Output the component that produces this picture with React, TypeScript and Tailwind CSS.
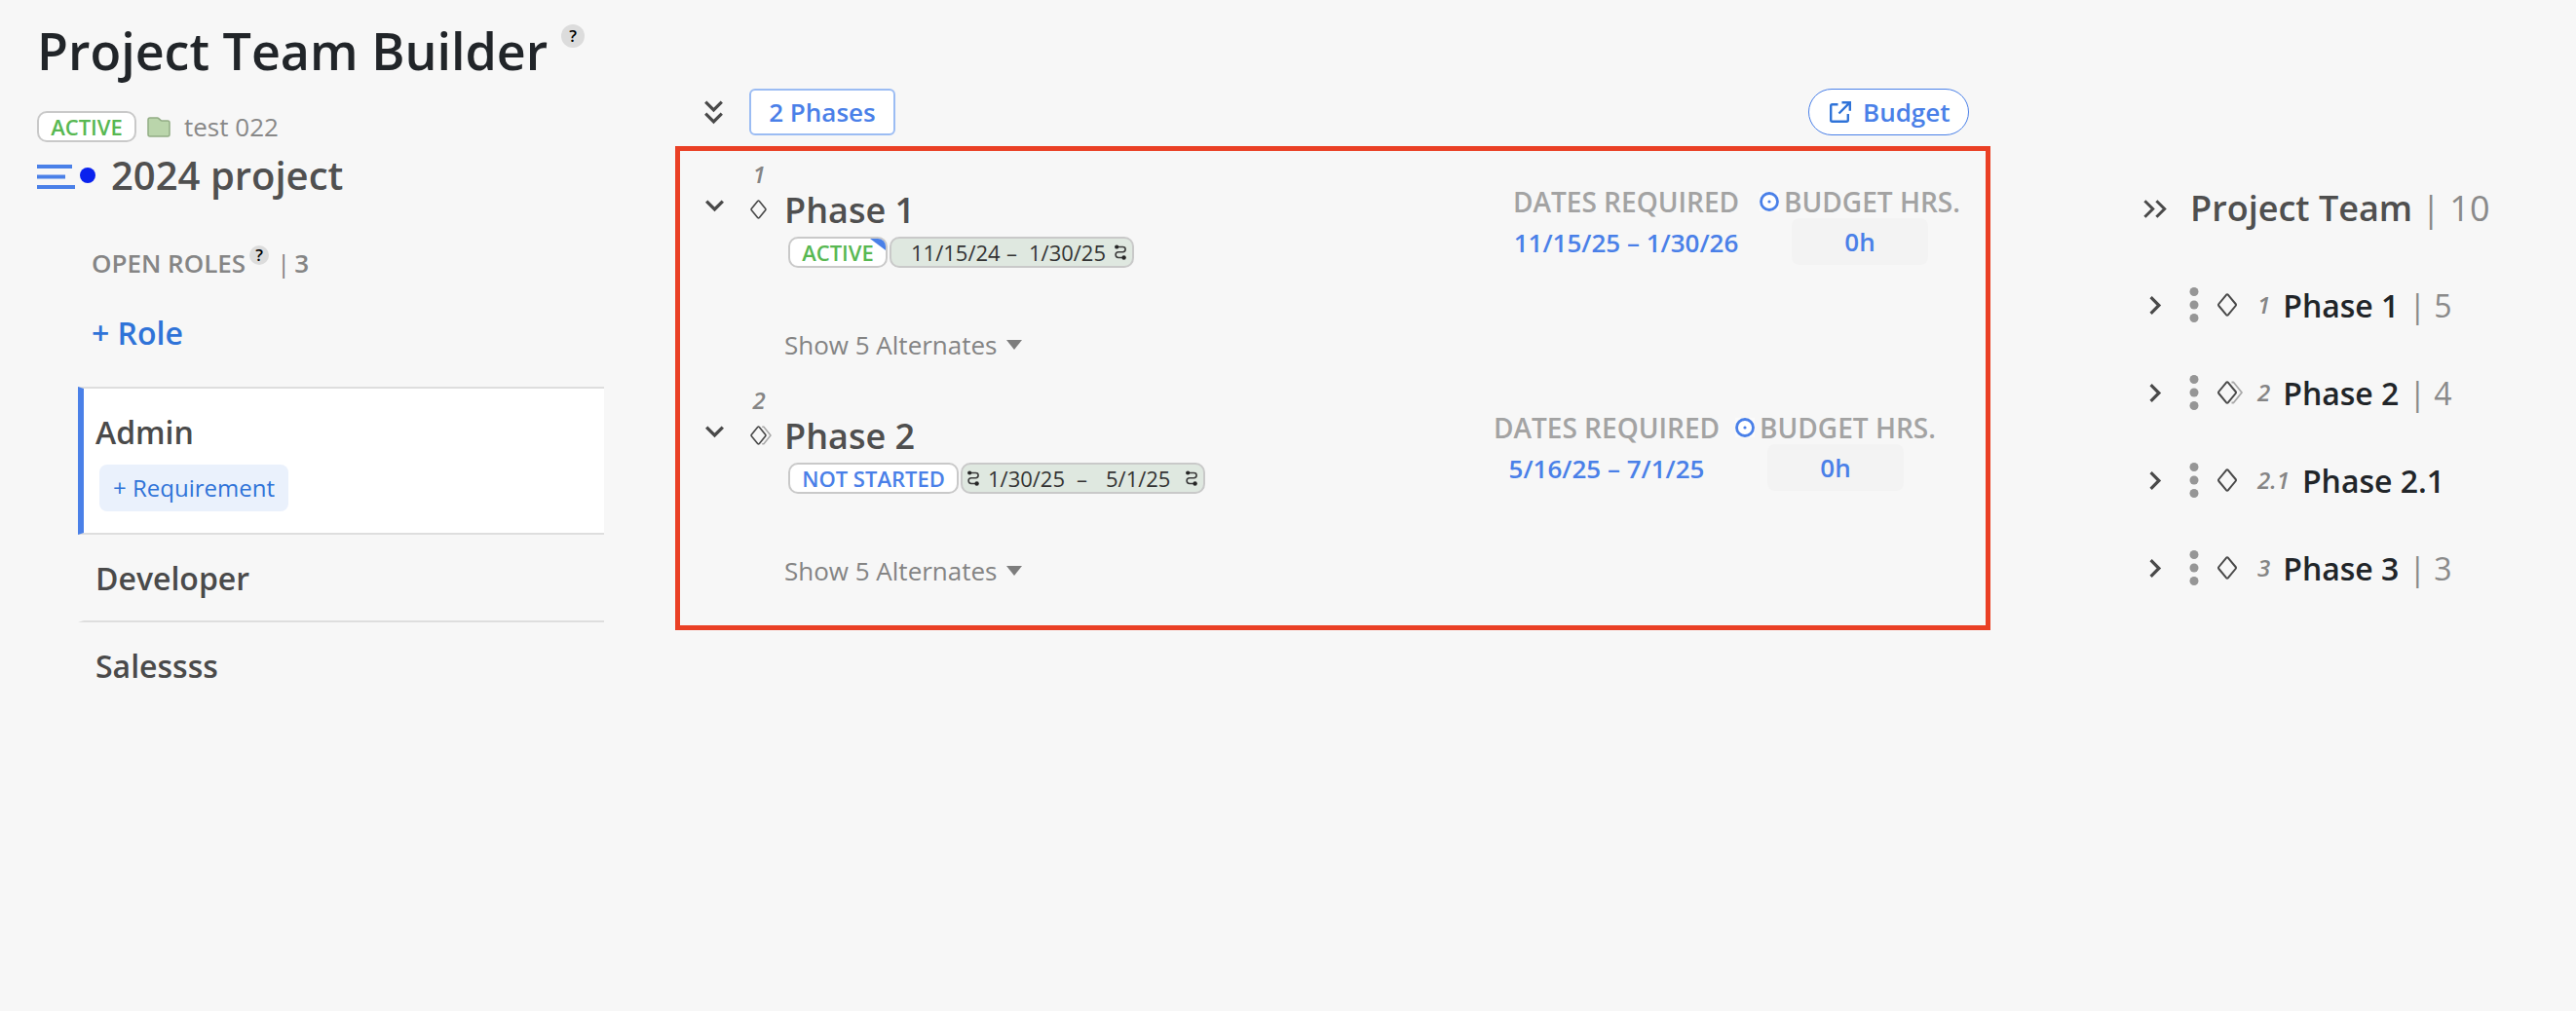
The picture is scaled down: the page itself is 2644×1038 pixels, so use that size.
import type { ReactNode } from "react";

type PhaseStatus = "ACTIVE" | "NOT STARTED";

interface Phase {
  id: number;
  name: string;
  status: PhaseStatus;
  nested?: boolean;
  flagged?: boolean;
  required: string;
}

const phases: Phase[] = [
  { id: 1, name: "Phase 1", status: "ACTIVE", flagged: true, required: "11/15/25 – 1/30/26" },
  { id: 2, name: "Phase 2", status: "NOT STARTED", nested: true, required: "5/16/25 – 7/1/25" },
];

const teamPhases = [
  { index: "1", name: "Phase 1", count: 5 },
  { index: "2", name: "Phase 2", count: 4, nested: true },
  { index: "2.1", name: "Phase 2.1" },
  { index: "3", name: "Phase 3", count: 3 },
];

const HelpBadge = ({ className }: { className: string }) => (
  <span className={`flex items-center justify-center rounded-full bg-[#dcdcdc] font-semibold text-black ${className}`}>?</span>
);

const ChevronDown = () => (
  <svg className="block h-[13px] w-[19px]" viewBox="0 0 19 13" fill="none" stroke="#4a4a4a" strokeWidth="3.4">
    <path d="M1.2 1.6 9.5 9.9 17.8 1.6" />
  </svg>
);

const ChevronRight = () => (
  <svg className="block h-[19px] w-[13px]" viewBox="0 0 13 19" fill="none" stroke="#4a4a4a" strokeWidth="3.2">
    <path d="M1.6 1.2 9.9 9.5 1.6 17.8" />
  </svg>
);

const Diamond = ({ nested, className }: { nested?: boolean; className: string }) => (
  <svg className={`block overflow-visible ${className}`} viewBox="0 0 20 24" fill="none" strokeLinejoin="round">
    {nested && <path d="M14.5 1.5h2L25 12l-8.500 10.500h-2" stroke="#a8a8a8" strokeWidth="1.8" />}
    <path
      d="M9 1.800Q10 .8 11 1.800L18.600 11Q19.400 12 18.600 13L11 22.200Q10 23.200 9 22.200L1.400 13Q.6 12 1.400 11Z"
      fill="#f7f7f7"
      stroke="#4a4a4a"
      strokeWidth="2"
    />
  </svg>
);

const LinkIcon = () => (
  <svg className="block h-4 w-3 shrink-0" viewBox="0 0 12 16" fill="none">
    <path d="M2 2.500h6.500a2.600 2.600 0 0 1 0 5.200H4a2.800 2.800 0 0 0 0 5.800h5" stroke="#3c3c3c" strokeWidth="1.6" />
    <circle cx="2.200" cy="2.500" r="2.100" fill="#262626" />
    <circle cx="9.600" cy="13.500" r="2.200" fill="#262626" />
  </svg>
);

const TargetIcon = () => (
  <svg className="block size-5 shrink-0" viewBox="0 0 20 20">
    <rect width="20" height="20" fill="#fbfbfb" />
    <circle cx="10" cy="10" r="8.500" fill="#fff" stroke="#4a80e8" strokeWidth="2.800" />
    <circle cx="10" cy="10" r="1.600" fill="#4a80e8" />
  </svg>
);

const StatusTag = ({ status, flagged }: { status: PhaseStatus; flagged?: boolean }) => (
  <span
    className={`relative flex h-8 items-center justify-center overflow-hidden rounded-[10px] border-2 border-[#c9c9c9] bg-white text-[22px] font-semibold ${
      status === "ACTIVE" ? "w-[102px] text-[#58b852]" : "w-[175px] text-[#4a80e8]"
    }`}
  >
    {status}
    {flagged && (
      <svg className="absolute top-0 right-0 h-3 w-4" viewBox="0 0 16 12">
        <path d="M0 0h16v12Z" fill="#4a80e8" />
      </svg>
    )}
  </span>
);

const DatePill = ({ children }: { children: ReactNode }) => (
  <span className="flex h-8 w-[251px] items-center rounded-[10px] border-2 border-[#c9c9c9] bg-[#dfe8e0] text-[22px] text-[#333]">
    {children}
  </span>
);

const PhaseDates = ({ nested }: { nested?: boolean }) =>
  nested ? (
    <DatePill>
      <span className="ml-[5px]"><LinkIcon /></span>
      <span className="ml-[9px] w-[79px]">1/30/25</span>
      <span className="ml-3 w-[14px]">–</span>
      <span className="ml-4 w-[67px]">5/1/25</span>
      <span className="ml-[15px]"><LinkIcon /></span>
    </DatePill>
  ) : (
    <DatePill>
      <span className="ml-5 w-[94px]">11/15/24</span>
      <span className="ml-1 w-[14px]">–</span>
      <span className="ml-[9px] w-[79px]">1/30/25</span>
      <span className="ml-[9px]"><LinkIcon /></span>
    </DatePill>
  );

const Sidebar = () => (
  <aside className="w-[693px] pl-[38px]">
    <div className="flex h-[103px]">
      <h1 className="text-[52px] leading-[103px] font-semibold text-[#212529]">Project Team Builder</h1>
      <HelpBadge className="mt-[25px] ml-[14px] size-6 text-[17px]" />
    </div>

    <div className="flex h-[54px] items-center text-[26px] text-[#888]">
      <StatusTag status="ACTIVE" />
      <svg className="mr-[14px] ml-[11px] h-[21px] w-6" viewBox="0 0 24 21">
        <path
          d="M3 1h7.500q.8 0 1.400.6l1.900 1.800q.5.500 1.300.500H21q2 0 2 2V18q0 2-2 2H3q-2 0-2-2V3q0-2 2-2Z"
          fill="#bad5ab"
          stroke="#93ad85"
          strokeWidth="1.500"
        />
      </svg>
      <span>test 022</span>
    </div>

    <div className="flex h-[45px] items-center">
      <svg className="mt-1 h-[26px] w-[39px]" viewBox="0 0 39 26" fill="#4a80e8">
        <path d="M0 0h36v4H0zM0 10.500h29v4H0zM0 21h39v4H0z" />
      </svg>
      <span className="ml-[5px] size-4 rounded-full bg-[#0a22ee]" />
      <span className="ml-4 text-[40px] leading-[45px] font-semibold text-[#505050]">2024 project</span>
    </div>

    <div className="mt-12 ml-14 flex h-10 text-[26px] leading-10 font-semibold text-[#858585]">
      <span className="w-[158px]">OPEN ROLES</span>
      <HelpBadge className="mt-[2px] mr-2 ml-1 size-5 text-[17px] leading-5" />
      <span className="font-normal">|</span>
      <span className="ml-1">3</span>
    </div>
    <div className="mt-8 ml-14 h-10 text-[32px] leading-10 font-semibold text-[#2f73d8]">+ Role</div>

    <ul className="mt-[35px] ml-[42px] w-[540px] text-[32px] leading-10 font-semibold text-[#4a4a4a]">
      <li className="h-[152px] border-y-2 border-l-6 border-y-[#dedede] border-l-[#4a80e8] bg-white pt-[25px] pl-3">
        Admin
        <button className="mt-[13px] ml-1 flex h-12 w-[194px] items-center justify-center rounded-lg bg-[#eaf1fc] text-2xl font-normal text-[#2f73d8]">
          + Requirement
        </button>
      </li>
      <li className="h-[90px] border-b-2 border-l-6 border-b-[#dedede] border-l-transparent pt-[25px] pl-3">Developer</li>
      <li className="h-[90px] border-l-6 border-l-transparent pt-[25px] pl-3">Salessss</li>
    </ul>
  </aside>
);

const PhaseRow = ({ phase }: { phase: Phase }) => (
  <section className="flex h-[232px]">
    <div className="w-[67px] pt-[50px] pl-[26px]">
      <ChevronDown />
    </div>
    <div className="flex w-7 flex-col items-center">
      <span className="mt-2 h-8 text-[24px] leading-8 font-semibold text-[#858585] italic">{phase.id}</span>
      <Diamond nested={phase.nested} className="mt-[10px] mr-px h-5 w-[17px]" />
    </div>
    <div className="pl-3">
      <h2 className="mt-9 h-[50px] text-[36px] leading-[50px] font-semibold text-[#4f4f4f]">{phase.name}</h2>
      <div className="mt-[2px] ml-1 flex gap-[2px]">
        <StatusTag status={phase.status} flagged={phase.flagged} />
        <PhaseDates nested={phase.nested} />
      </div>
      <div className="mt-[59px] flex h-10 items-center text-[26px] text-[#848484]">
        Show 5 Alternates
        <svg className="ml-[9px] h-[10px] w-4" viewBox="0 0 16 10">
          <path d="M0 0h16L8 10Z" fill="#7d7d7d" />
        </svg>
      </div>
    </div>
    <div className={`ml-auto flex text-[26px] font-semibold text-[#4a80e8] ${phase.nested ? "gap-[15px] pr-[50px]" : "gap-5 pr-[25px]"}`}>
      <div className="flex w-[232px] flex-col items-center">
        <span className="mt-8 text-[28px] leading-10 text-[#a3a3a3]">DATES REQUIRED</span>
        <span className="mt-[2px] leading-10">{phase.required}</span>
      </div>
      <div className="flex w-[208px] flex-col items-center">
        <span className="mt-8 flex items-center gap-[5px] text-[28px] leading-10 text-[#a3a3a3]">
          <TargetIcon />
          BUDGET HRS.
        </span>
        <span className="-mt-[3px] h-12 w-[140px] rounded-lg bg-[#f3f3f3] text-center leading-[48px]">0h</span>
      </div>
    </div>
  </section>
);

const PhaseBoard = () => (
  <main className="w-[1350px] pt-[91px]">
    <div className="flex h-12 items-center pr-[22px] pl-[30px] text-[26px] font-semibold text-[#4a80e8]">
      <svg className="h-[25px] w-[19px]" viewBox="0 0 19 25" fill="none" stroke="#4a4a4a" strokeWidth="3.200">
        <path d="M1.200 1.600 9.500 9.900 17.800 1.600M1.200 13.600 9.500 21.900 17.800 13.600" />
      </svg>
      <button className="ml-[27px] h-12 w-[150px] rounded-md border-2 border-[#9bbcf3] bg-white">2 Phases</button>
      <button className="ml-auto flex h-12 w-[165px] items-center rounded-full border border-[#4a80e8] bg-white pl-[21px]">
        <svg className="mr-3 h-[22px] w-[22px]" viewBox="0 0 22 22" fill="none" stroke="#2f73d8" strokeWidth="2.400">
          <path d="M8.500 3.200H2.700q-1.500 0-1.500 1.500v14.600q0 1.500 1.500 1.500h14.600q1.500 0 1.500-1.500V13M12.500 1.200h8.300v8.600M20.800 1.200 9.500 12.500" />
        </svg>
        Budget
      </button>
    </div>
    <div className="mt-[11px] h-[497px] border-5 border-[#ea4025]">
      {phases.map((phase) => (
        <PhaseRow key={phase.id} phase={phase} />
      ))}
    </div>
  </main>
);

const TeamPanel = () => (
  <aside className="pt-[189px] pl-[157px]">
    <div className="flex h-[50px] items-center text-[36px]">
      <svg className="h-[19px] w-[25px]" viewBox="0 0 25 19" fill="none" stroke="#4a4a4a" strokeWidth="3">
        <path d="M1.400 1.200 9.700 9.500 1.400 17.800M13.400 1.200 21.700 9.500 13.400 17.800" />
      </svg>
      <span className="ml-[23px] font-semibold text-[#4f4f4f]">Project Team</span>
      <span className="ml-[9px] text-[#8a8a8a]">| 10</span>
    </div>
    <ul className="mt-[29px] ml-[6px]">
      {teamPhases.map((phase) => (
        <li key={phase.index} className="flex h-[90px] items-center text-[32px]">
          <ChevronRight />
          <svg className="ml-7 h-9 w-[10px]" viewBox="0 0 10 36" fill="#969696">
            <circle cx="5" cy="4.500" r="4.500" />
            <circle cx="5" cy="18" r="4.500" />
            <circle cx="5" cy="31.500" r="4.500" />
          </svg>
          <Diamond nested={phase.nested} className="ml-[19px] h-6 w-5" />
          <span className="ml-[21px] text-2xl font-semibold text-[#858585] italic">{phase.index}</span>
          <span className="ml-[13px] pt-px font-semibold text-[#212529]">{phase.name}</span>
          {phase.count && <span className="ml-[10px] pt-px text-[#8a8a8a]">| {phase.count}</span>}
        </li>
      ))}
    </ul>
  </aside>
);

export default function App() {
  return (
    <div className="flex h-[1038px] w-[2644px] overflow-hidden bg-[#f7f7f7] font-['Open_Sans',sans-serif] whitespace-nowrap">
      <Sidebar />
      <PhaseBoard />
      <TeamPanel />
    </div>
  );
}
